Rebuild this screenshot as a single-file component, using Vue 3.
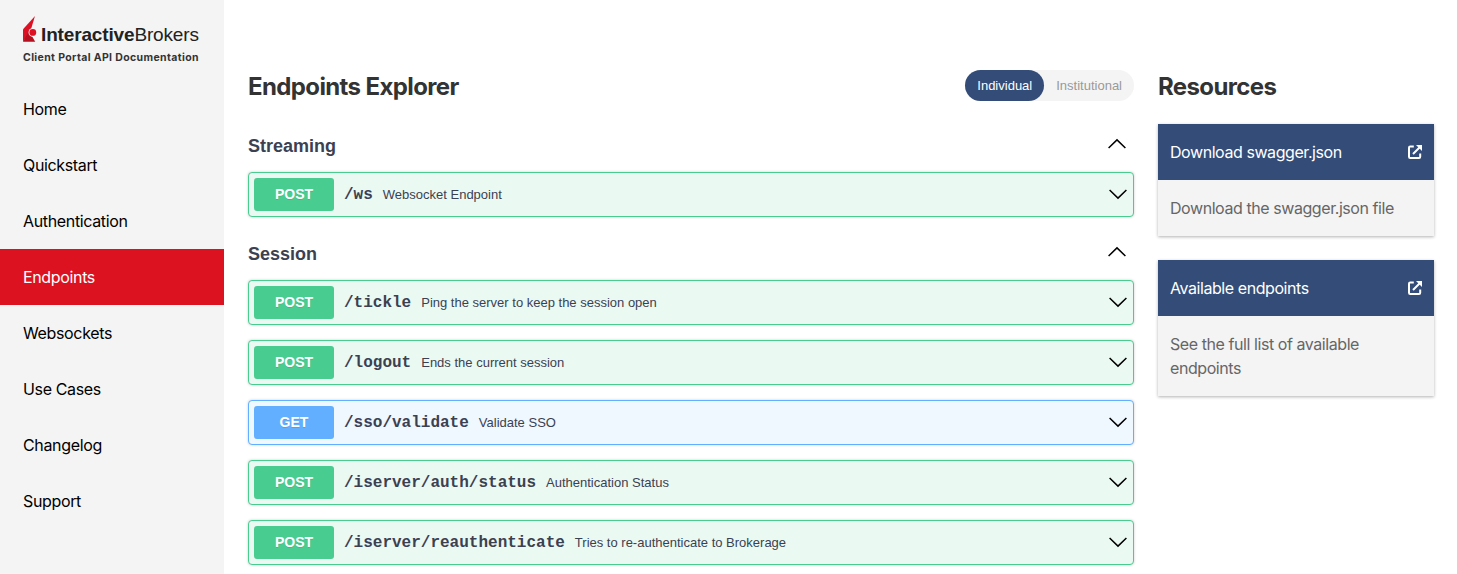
<script setup>
const nav = [
  { label: 'Home' },
  { label: 'Quickstart' },
  { label: 'Authentication' },
  { label: 'Endpoints', active: true },
  { label: 'Websockets' },
  { label: 'Use Cases' },
  { label: 'Changelog' },
  { label: 'Support' },
]

const sections = [
  {
    title: 'Streaming',
    endpoints: [{ method: 'POST', path: '/ws', summary: 'Websocket Endpoint' }],
  },
  {
    title: 'Session',
    endpoints: [
      { method: 'POST', path: '/tickle', summary: 'Ping the server to keep the session open' },
      { method: 'POST', path: '/logout', summary: 'Ends the current session' },
      { method: 'GET', path: '/sso/validate', summary: 'Validate SSO' },
      { method: 'POST', path: '/iserver/auth/status', summary: 'Authentication Status' },
      { method: 'POST', path: '/iserver/reauthenticate', summary: 'Tries to re-authenticate to Brokerage' },
    ],
  },
]

const resources = [
  { title: 'Download swagger.json', text: 'Download the swagger.json file' },
  { title: 'Available endpoints', text: 'See the full list of available endpoints' },
]
</script>

<template>
  <div class="page">
    <aside class="sidebar">
      <div class="brand">
        <div class="logo">
          <svg class="mark" width="14" height="27" viewBox="0 0 14 27">
            <path d="M12 0 L0 13.2 V25.8 L7 16.5 Z" fill="#dc1224" />
            <path d="M0 25.8 L6 14.8 L12.2 25.8 Z" fill="#b5101f" />
            <circle cx="9.8" cy="16.4" r="4.3" fill="#f4f4f4" />
            <circle cx="9.8" cy="16.4" r="3.4" fill="#dc1224" />
          </svg>
          <span class="wordmark"><b>Interactive</b><span class="light">Brokers</span></span>
        </div>
        <div class="tagline">Client Portal API Documentation</div>
      </div>
      <nav>
        <a v-for="n in nav" :key="n.label" class="nav-item" :class="{ active: n.active }">{{ n.label }}</a>
      </nav>
    </aside>

    <main class="explorer">
      <header class="head">
        <h1>Endpoints Explorer</h1>
        <div class="toggle">
          <span class="opt on">Individual</span>
          <span class="opt">Institutional</span>
        </div>
      </header>

      <section v-for="s in sections" :key="s.title" class="group">
        <div class="group-head">
          <h2>{{ s.title }}</h2>
          <svg class="chev" width="20" height="20" viewBox="0 0 20 20">
            <path d="M1.6 13 L10 4.9 L18.4 13" fill="none" stroke="#000" stroke-width="1.5" />
          </svg>
        </div>
        <div v-for="e in s.endpoints" :key="e.path" class="op" :class="e.method.toLowerCase()">
          <span class="method">{{ e.method }}</span>
          <span class="path">{{ e.path }}</span>
          <span class="summary">{{ e.summary }}</span>
          <svg class="chev" width="20" height="20" viewBox="0 0 20 20">
            <path d="M1.6 5 L10 13.1 L18.4 5" fill="none" stroke="#000" stroke-width="1.5" />
          </svg>
        </div>
      </section>
    </main>

    <aside class="resources">
      <h1>Resources</h1>
      <article v-for="r in resources" :key="r.title" class="card">
        <div class="card-head">
          <span>{{ r.title }}</span>
          <svg width="16" height="16" viewBox="0 0 16 16" fill="none" stroke="#fff" stroke-width="2">
            <path d="M6.8 2.6 H3.2 Q2 2.6 2 3.8 V12.8 Q2 14 3.2 14 H12 Q13.2 14 13.2 12.8 V9.5" />
            <path d="M6 10 L13 3" />
            <path d="M9 1.1 H15 V7 Z" fill="#fff" stroke="none" />
          </svg>
        </div>
        <div class="card-body">{{ r.text }}</div>
      </article>
    </aside>
  </div>
</template>

<style>
html,
body {
  overflow: hidden;
  background: #fff;
}
</style>

<style scoped>
.page {
  display: grid;
  grid-template-columns: 224px 886px 276px;
  column-gap: 24px;
  height: 574px;
  overflow: hidden;
  font-family: Inter, "Liberation Sans", sans-serif;
  font-size: 16px;
  color: #333;
}
.sidebar {
  background: #f4f4f4;
}
.brand {
  height: 81px;
  box-sizing: border-box;
  padding: 16px 0 0 23px;
}
.logo {
  display: flex;
  height: 28px;
}
.wordmark {
  margin: 8px 0 0 4px;
  font: 19px/22px "Liberation Sans", Arial, sans-serif;
  color: #222;
  white-space: nowrap;
  letter-spacing: -0.15px;
}
.tagline {
  margin-top: 7px;
  font-size: 10.5px;
  line-height: 14px;
  font-weight: 700;
  letter-spacing: 0.37px;
  white-space: nowrap;
}
.nav-item {
  display: block;
  height: 56px;
  line-height: 56px;
  padding-left: 23px;
  letter-spacing: -0.35px;
  color: #000;
}
.nav-item.active {
  background: #dc1220;
  color: #fff;
}
h1 {
  margin: 0;
  font-size: 24px;
  line-height: 32px;
  font-weight: 700;
  letter-spacing: -0.62px;
  color: #333;
}
.head {
  display: flex;
  justify-content: space-between;
  align-items: flex-start;
  padding-top: 70px;
  height: 48px;
}
.head h1 {
  padding-top: 1px;
}
.toggle {
  display: flex;
  height: 31px;
  border-radius: 16px;
  background: #f4f4f4;
  font: 13px/31px "Liberation Sans", Arial, sans-serif;
  color: #999;
}
.opt {
  padding: 0 12px;
  border-radius: 16px;
}
.opt.on {
  background: #334c78;
  color: #fff;
}
.group-head {
  display: flex;
  justify-content: space-between;
  align-items: center;
  height: 54px;
  padding-right: 7px;
}
.group + .group .group-head {
  margin-top: -6px;
}
h2 {
  margin: 2px 0 0;
  font: 700 18px/24px "Liberation Sans", Arial, sans-serif;
  letter-spacing: 0;
  color: #3b4151;
}
.op {
  display: flex;
  align-items: center;
  height: 45px;
  box-sizing: border-box;
  margin-bottom: 15px;
  padding: 0 5px;
  border: 1px solid #49cc90;
  border-radius: 4px;
  background: #ebf9f3;
  box-shadow: 0 0 3px rgba(0, 0, 0, 0.19);
  color: #3b4151;
}
.method {
  width: 80px;
  height: 33px;
  border-radius: 3px;
  background: #49cc90;
  color: #fff;
  font: 700 14px/33px "Liberation Sans", Arial, sans-serif;
  text-align: center;
  text-shadow: 0 1px 0 rgba(0, 0, 0, 0.1);
}
.get {
  border-color: #61affe;
  background: #eff7ff;
}
.get .method {
  background: #61affe;
}
.path {
  margin-left: 10px;
  font: 700 16px/20px "Liberation Mono", "Courier New", monospace;
}
.summary {
  margin-left: 10px;
  flex: 1;
  font: 13px/20px "Liberation Sans", Arial, sans-serif;
}
.resources h1 {
  padding-top: 71px;
  margin-bottom: 21px;
}
.card {
  margin-bottom: 24px;
  box-shadow: 0 1px 3px rgba(0, 0, 0, 0.3);
  letter-spacing: -0.43px;
}
.card-head {
  display: flex;
  justify-content: space-between;
  align-items: center;
  height: 56px;
  padding: 0 11px 0 12px;
  background: #334c78;
  color: #fff;
}
.card-body {
  padding: 16px 12px;
  line-height: 24px;
  background: #f4f4f4;
  color: #666;
}
</style>
